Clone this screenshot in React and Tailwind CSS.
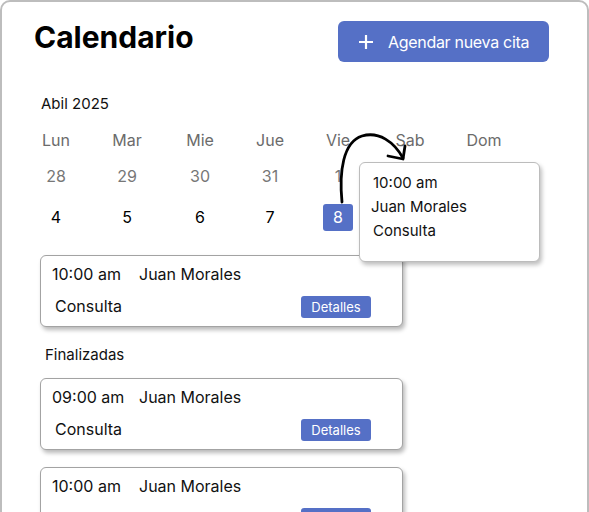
import React from 'react';

const weekDays = ['Lun', 'Mar', 'Mie', 'Jue', 'Vie', 'Sab', 'Dom'];
const prevDays = ['28', '29', '30', '31', '1', '', ''];
const nextDays = ['4', '5', '6', '7', '8', '', ''];

const AppointmentCard = ({ time, name, type, className = '' }) => (
  <div
    className={`ml-[38px] w-[363px] h-[72px] shrink-0 rounded-[6px] border border-[#a3a3a3] bg-white shadow-[2px_3px_4px_rgba(0,0,0,0.28)] pl-[11px] pr-[31px] pt-[7px] ${className}`}
  >
    <div className="flex text-[16px] leading-[22px] text-[#111]">
      <span className="w-[87px]">{time}</span>
      <span>{name}</span>
    </div>
    <div className="mt-[11px] flex items-start justify-between">
      <span className="ml-[3px] text-[16px] leading-[20px] text-[#111]">{type}</span>
      <button className="w-[70px] h-[22px] rounded-[3px] bg-[#5570c6] text-white text-[13px] leading-[22px]">
        Detalles
      </button>
    </div>
  </div>
);

const App = () => {
  return (
    <div className="relative w-[589px] h-[512px] overflow-hidden bg-white font-['Inter',sans-serif]">
      <div className="flex flex-col h-[530px] rounded-t-[10px] border-2 border-[#bdbdbd]">
        <div className="flex items-start justify-between pt-[19px] pl-[32px] pr-[38px]">
          <h1 className="-mt-[2px] text-[30px] leading-[36px] font-bold text-black">Calendario</h1>
          <button className="flex items-center w-[211px] h-[41px] rounded-[6px] bg-[#5570c6] pl-[21px] text-white text-[16px] tracking-[-0.3px]">
            <svg width="14" height="14" viewBox="0 0 14 14" className="mr-[15px]">
              <path d="M7 0.5v13M0.5 7h13" stroke="white" strokeWidth="2.2" strokeLinecap="round" />
            </svg>
            Agendar nueva cita
          </button>
        </div>

        <p className="mt-[32px] pl-[39px] text-[15px] leading-[20px] text-[#111]">Abil 2025</p>

        <div className="mt-[8px] ml-[19px] grid grid-cols-[70px_72px_74px_66px_70px_74px_74px]">
          {weekDays.map((d) => (
            <div key={d} className="h-[36px] flex items-center justify-center text-[16px] text-[#6b6b6b]">
              {d}
            </div>
          ))}
          {prevDays.map((d, i) => (
            <div key={'p' + i} className="h-[36px] flex items-center justify-center text-[16px] text-[#777]">
              {d}
            </div>
          ))}
          {nextDays.map((d, i) => (
            <div key={'n' + i} className="h-[46px] flex items-center justify-center text-[16px] text-black">
              {d === '8' ? (
                <span className="w-[30px] h-[27px] rounded-[3px] bg-[#5570c6] text-white flex items-center justify-center">
                  8
                </span>
              ) : (
                d
              )}
            </div>
          ))}
        </div>

        <AppointmentCard className="mt-[15px]" time="10:00 am" name="Juan Morales" type="Consulta" />

        <p className="mt-[18px] pl-[43px] text-[15px] leading-[20px] text-[#111]">Finalizadas</p>

        <AppointmentCard className="mt-[13px]" time="09:00 am" name="Juan Morales" type="Consulta" />
        <AppointmentCard className="mt-[17px]" time="10:00 am" name="Juan Morales" type="Consulta" />
      </div>

      <div className="absolute left-[359px] top-[162px] w-[181px] h-[100px] rounded-[6px] border border-[#bcbcbc] bg-white shadow-[2px_3px_4px_rgba(0,0,0,0.25)] pt-[8px] pl-[13px] text-[15px] leading-[24px] text-[#111] z-10">
        <p>10:00 am</p>
        <p className="-ml-[2px]">Juan Morales</p>
        <p>Consulta</p>
      </div>

      <svg className="absolute inset-0 z-20 pointer-events-none" width="589" height="512" viewBox="0 0 589 512">
        <path
          d="M342 202 C339 172 343 142 362 136 C379 131 394 142 403 158"
          fill="none"
          stroke="black"
          strokeWidth="2.8"
          strokeLinecap="round"
        />
        <path
          d="M405 146 L403 159 L388 156"
          fill="none"
          stroke="black"
          strokeWidth="2.8"
          strokeLinecap="round"
          strokeLinejoin="round"
        />
      </svg>
    </div>
  );
};

export default App;
